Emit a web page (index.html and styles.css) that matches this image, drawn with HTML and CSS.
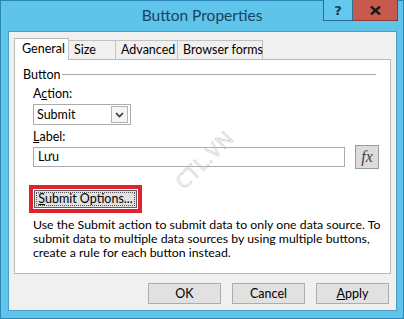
FILE: index.html
```html
<!DOCTYPE html>
<html>
<head>
<meta charset="utf-8">
<link rel="stylesheet" href="styles.css">
</head>
<body>
<div class="window">
  <div class="titlebar">
    <div></div>
    <div class="title">Button Properties</div>
    <div class="caption">
      <div class="cbtn help">?</div>
      <div class="cbtn close">
        <svg width="11" height="9" viewBox="0 0 11 9"><path d="M1 0.5 L10 8.5 M10 0.5 L1 8.5" stroke="#1a1a1a" stroke-width="2.4"/></svg>
      </div>
    </div>
  </div>
  <div class="client">
    <div class="tabs">
      <div class="tab active">General</div>
      <div class="tab">Size</div>
      <div class="tab">Advanced</div>
      <div class="tab">Browser forms</div>
    </div>
    <div class="panel">
      <div class="group-title"><span>Button</span><div class="rule"></div></div>
      <div class="field">
        <div class="lbl">A<u>c</u>tion:</div>
        <div class="select"><span>Submit</span>
          <div class="drop"><svg width="9" height="6" viewBox="0 0 9 6"><path d="M1 1 L4.5 4.5 L8 1" stroke="#333" stroke-width="1.6" fill="none"/></svg></div>
        </div>
      </div>
      <div class="field">
        <div class="lbl"><u>L</u>abel:</div>
        <div class="label-row">
          <div class="input">Lưu</div>
          <div class="fx">fx</div>
        </div>
      </div>
      <div class="highlight">
        <div class="btn-opts"><span class="focus"><u>S</u>ubmit Options...</span></div>
      </div>
      <p class="desc">Use the Submit action to submit data to only one data source. To submit data to multiple data sources by using multiple buttons, create a rule for each button instead.</p>
      <div class="watermark">CTL.VN</div>
    </div>
    <div class="actions">
      <div class="btn">OK</div>
      <div class="btn">Cancel</div>
      <div class="btn"><u>A</u>pply</div>
    </div>
  </div>
</div>
</body>
</html>
```
FILE: styles.css
```css
* { box-sizing: border-box; }
html, body { margin: 0; padding: 0; }
body {
  width: 404px;
  height: 319px;
  overflow: hidden;
  font-family: "Lato", "Open Sans", sans-serif;
  font-size: 12.5px;
  color: #000;
}
.window {
  width: 404px;
  height: 319px;
  background: #5fc4ea;
  border: 1px solid #2c86b4;
  display: flex;
  flex-direction: column;
}
.titlebar {
  height: 30px;
  display: grid;
  grid-template-columns: 1fr auto 1fr;
  align-items: start;
}
.title {
  font-size: 15.5px;
  color: #1d3f5c;
  padding-top: 5px;
  white-space: nowrap;
}
.caption {
  justify-self: end;
  display: flex;
  margin-right: 5px;
  margin-top: -1px;
}
.cbtn {
  height: 21px;
  display: flex;
  align-items: center;
  justify-content: center;
}
.help {
  width: 30px;
  background: #64c8ee;
  border: 1px solid #2b6f92;
  border-top: none;
  font-weight: bold;
  font-size: 13px;
  color: #163a56;
  font-family: "DejaVu Sans", sans-serif;
}
.close {
  width: 45px;
  background: #c75a4f;
  border: 1px solid #8e3b33;
  border-top: none;
  border-left: none;
}
.client {
  margin: 0 6px 0 7px;
  height: 280px;
  background: #f0f0f0;
  border: 1px solid #4c9cc6;
  padding: 6px 5px 0 5px;
  display: flex;
  flex-direction: column;
}
.tabs {
  display: flex;
  align-items: flex-end;
  height: 21px;
  position: relative;
  z-index: 1;
}
.tab {
  height: 19px;
  padding: 0 5px;
  border: 1px solid #c2c2c2;
  border-bottom: none;
  background: #f0f0f0;
  line-height: 17px;
  margin-left: -1px;
  color: #000;
  white-space: nowrap;
}
.tab.active {
  height: 22px;
  margin-bottom: -1px;
  background: #fff;
  border-color: #b9b9b9;
  margin-left: 0;
  padding: 0 9px 0 7px;
  line-height: 19px;
  width: 55px;
}
.tab:nth-child(2) { width: 48px; }
.tab:nth-child(3) { width: 63px; }
.tab:nth-child(4) { width: 86px; }
.panel {
  position: relative;
  height: 215px;
  background: #fff;
  border: 1px solid #b9b9b9;
  padding: 6px 8px 0 8px;
}
.group-title {
  display: flex;
  align-items: center;
  gap: 1px;
  height: 16px;
}
.rule {
  flex: 1;
  height: 1px;
  background: #a8a8a8;
  margin-right: 6px;
}
.field { padding-left: 10px; }
.lbl { margin-top: 4px; height: 16px; line-height: 16px; }
.field + .field .lbl { margin-top: 4px; }
.select {
  margin-top: 2px;
  width: 98px;
  height: 21px;
  border: 1px solid #acacac;
  display: flex;
  align-items: center;
  justify-content: space-between;
  padding: 0 2px 0 3px;
  background: #fff;
}
.drop {
  width: 17px;
  height: 17px;
  border: 1px solid #b4b4b4;
  background: #f5f5f5;
  display: flex;
  align-items: center;
  justify-content: center;
}
.label-row {
  display: flex;
  align-items: center;
  gap: 10px;
  margin-top: 0;
}
.input {
  width: 312px;
  height: 20px;
  border: 1px solid #acacac;
  padding-left: 4px;
  line-height: 18px;
}
.fx {
  width: 24px;
  height: 24px;
  background: #dcdcdc;
  border: 1px solid #9a9a9a;
  font-family: "Liberation Serif", serif;
  font-style: italic;
  font-size: 16px;
  color: #444;
  text-align: center;
  line-height: 21px;
}
.highlight {
  margin-top: 16px;
  margin-left: 6px;
  width: 113px;
  height: 28px;
  border: 4px solid #e0222f;
  padding: 1px;
}
.btn-opts {
  height: 18px;
  background: #e1e1e1;
  border: 1px solid #5e5e5e;
  padding: 1px;
  display: flex;
}
.focus {
  flex: 1;
  border: 1px dotted #555;
  text-align: center;
  line-height: 12px;
  white-space: nowrap;
}
.desc {
  margin: 5px 0 0 10px;
  line-height: 14px;
  width: 352px;
  font-size: 12.3px;
  color: #000;
}
.watermark {
  position: absolute;
  left: 153px;
  top: 86px;
  font-size: 20px;
  font-family: "Open Sans", sans-serif;
  color: transparent;
  -webkit-text-stroke: 0.5px #bdbdbd;
  transform: rotate(-45deg);
  letter-spacing: 1px;
}
.actions {
  display: flex;
  justify-content: flex-end;
  gap: 11px;
  margin-top: 9px;
  padding-right: 2px;
}
.btn {
  width: 73px;
  height: 21px;
  background: #e1e1e1;
  border: 1px solid #adadad;
  text-align: center;
  line-height: 19px;
}
```
